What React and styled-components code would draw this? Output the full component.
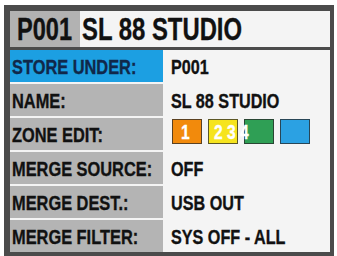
import React from "react";
import styled, { createGlobalStyle } from "styled-components";

const Global = createGlobalStyle`
  html, body { margin: 0; padding: 0; background: #ffffff; }
  body { font-family: "Liberation Sans", Arial, sans-serif; }
`;

const Frame = styled.div`
  box-sizing: border-box;
  margin: 5px 0 0 4px;
  width: 330px;
  height: 251px;
  border-style: solid;
  border-color: #4b4b4b;
  border-width: 6px 4px 4px 6px;
  background: #f4f4f4;
  display: flex;
  flex-direction: column;
`;

const TitleBar = styled.div`
  display: grid;
  grid-template-columns: 70px 1fr;
  height: 36px;
  border-bottom: 3px solid #4b4b4b;
  background: #f4f4f4;
`;

const TitleCell = styled.div`
  display: flex;
  align-items: center;
  padding-left: ${(p) => p.$pad}px;
  background: ${(p) => (p.$shade ? "#b2b2b2" : "#f4f4f4")};
  overflow: hidden;
`;

const Narrow = styled.span`
  display: inline-block;
  white-space: nowrap;
  font-weight: 700;
  color: ${(p) => p.$color || "#111"};
  font-size: ${(p) => p.$size}px;
  line-height: 1;
  -webkit-text-stroke: 0.35px ${(p) => p.$color || "#111"};
  transform: scaleX(${(p) => p.$scale});
  transform-origin: left center;
`;

const Rows = styled.div`
  display: flex;
  flex-direction: column;
  gap: 2px;
`;

const Row = styled.div`
  display: grid;
  grid-template-columns: 153px 1fr;
  height: 32px;
`;

const Label = styled.div`
  display: flex;
  align-items: center;
  padding-left: 2px;
  background: ${(p) => (p.$active ? "#1c9fe2" : "#b4b4b4")};
`;

const Value = styled.div`
  display: flex;
  align-items: center;
  padding-left: 8px;
`;

const Zones = styled.div`
  display: flex;
  align-items: flex-start;
  gap: 6px;
  padding: 1px 0 0 9px;
`;

const Swatch = styled.div`
  position: relative;
  box-sizing: border-box;
  width: 30px;
  height: 25px;
  background: ${(p) => p.$bg};
  border: 1px solid rgba(40, 40, 40, 0.75);
  display: flex;
  align-items: center;
  justify-content: ${(p) => (p.$left ? "flex-start" : "center")};
  padding-left: ${(p) => (p.$left ? 5 : 0)}px;
  z-index: ${(p) => (p.$top ? 2 : 1)};
`;

const rows = [
  ["STORE UNDER:", "P001", true],
  ["NAME:", "SL 88 STUDIO"],
  ["ZONE EDIT:", null],
  ["MERGE SOURCE:", "OFF"],
  ["MERGE DEST.:", "USB OUT"],
  ["MERGE FILTER:", "SYS OFF - ALL"],
];

export default function App() {
  return (
    <>
      <Global />
      <Frame>
        <TitleBar>
          <TitleCell $shade $pad={7}>
            <Narrow $size={31} $scale={0.76}>P001</Narrow>
          </TitleCell>
          <TitleCell $pad={2}>
            <Narrow $size={31} $scale={0.77}>SL 88 STUDIO</Narrow>
          </TitleCell>
        </TitleBar>
        <Rows>
          {rows.map(([label, value, active]) => (
            <Row key={label}>
              <Label $active={active}>
                <Narrow $size={21} $scale={0.78} $color={active ? "#10284a" : "#111"}>
                  {label}
                </Narrow>
              </Label>
              {value ? (
                <Value>
                  <Narrow $size={21} $scale={0.77}>{value}</Narrow>
                </Value>
              ) : (
                <Zones>
                  <Swatch $bg="#f28a0c">
                    <Narrow $size={20} $scale={0.78} $color="#fff">1</Narrow>
                  </Swatch>
                  <Swatch $bg="#f6e41e" $left $top>
                    <Narrow $size={20} $scale={0.78} $color="#fff">2 3 4</Narrow>
                  </Swatch>
                  <Swatch $bg="#2f9f55" />
                  <Swatch $bg="#2ba1e3" />
                </Zones>
              )}
            </Row>
          ))}
        </Rows>
      </Frame>
    </>
  );
}
